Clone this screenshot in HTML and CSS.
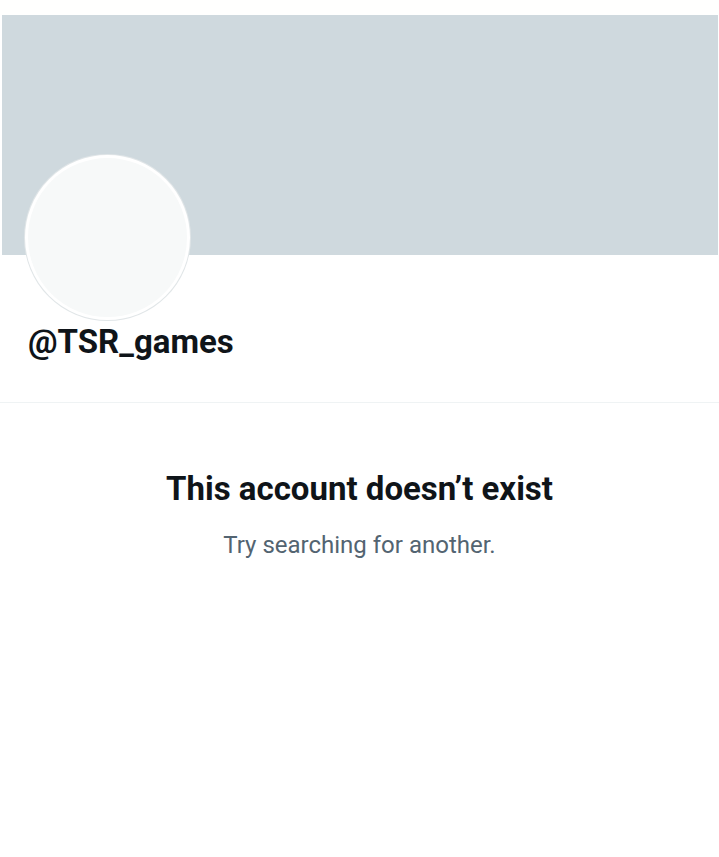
FILE: index.html
```html
<!DOCTYPE html>
<html lang="en">
<head>
  <meta charset="UTF-8">
  <meta name="viewport" content="width=device-width, initial-scale=1.0">
  <title>@TSR_games</title>
  <link rel="stylesheet" href="styles.css">
</head>
<body>
  <div class="page">
    <div class="top-strip"></div>
    <div class="banner"></div>
    <div class="profile">
      <div class="avatar"></div>
      <h1 class="handle">@TSR_games</h1>
    </div>
    <div class="empty-state">
      <h2>This account doesn’t exist</h2>
      <p>Try searching for another.</p>
    </div>
  </div>
</body>
</html>
```

FILE: styles.css
```css
body {
  font-family: Roboto, "Liberation Sans", sans-serif;
  margin: 0;
  padding: 0;
  background: #ffffff;
  color: #0f1419;
}

.page {
  width: 719px;
  min-height: 857px;
}

.top-strip {
  height: 15px;
  background: #fffffe;
}

.banner {
  height: 240px;
  margin: 0 1px 0 2px;
  background: #cfd9de;
}

.profile {
  display: flex;
  flex-direction: column;
  align-items: flex-start;
  padding: 0 0 40px 25px;
  border-bottom: 1px solid #eff3f4;
}

.avatar {
  width: 159px;
  height: 159px;
  margin-top: -100px;
  border-radius: 50%;
  background: #f7f9f9;
  border: 3px solid #ffffff;
  box-shadow: 0 0 0 1px #e1e6e8;
}

.handle {
  font-size: 33px;
  font-weight: 700;
  margin: 2px 0 0 3px;
  line-height: 40px;
}

.empty-state {
  text-align: center;
  padding-top: 66px;
}

.empty-state h2 {
  font-size: 33px;
  font-weight: 700;
  margin: 0;
  line-height: 40px;
}

.empty-state p {
  font-size: 24px;
  color: #536471;
  margin: 21px 0 0;
  line-height: 30px;
}
```
